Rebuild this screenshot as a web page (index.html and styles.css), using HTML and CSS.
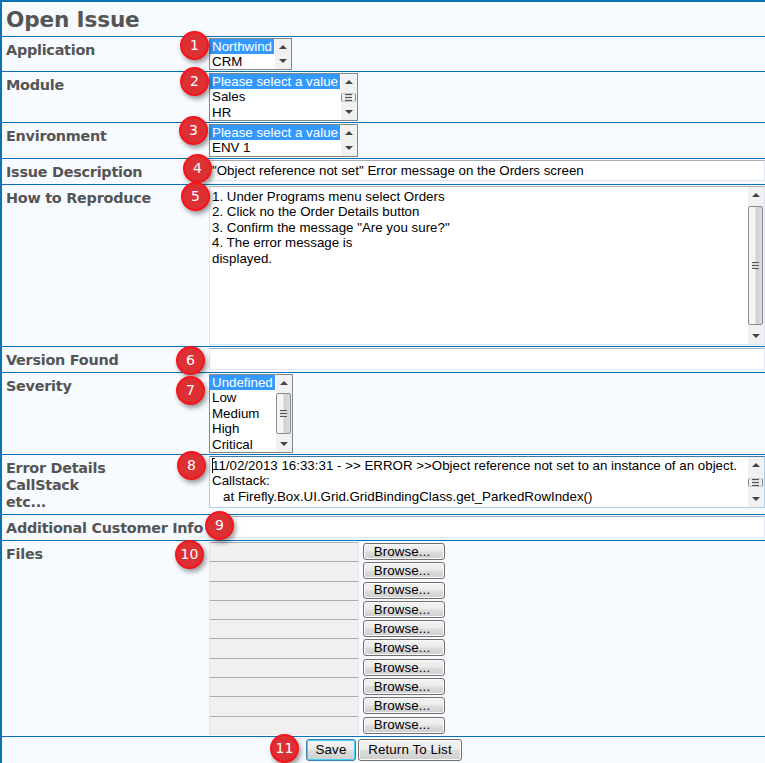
FILE: index.html
```html
<!DOCTYPE html>
<html lang="en">
<head>
<meta charset="utf-8">
<title>Open Issue</title>
<link rel="stylesheet" href="styles.css">
</head>
<body>
<main class="form">
  <h1 class="title"><span>Open Issue</span></h1>

  <div class="row r-app"><div class="label">Application</div>
    <div class="list"><div class="opts"><div class="opt on">Northwind</div><div class="opt">CRM</div></div><div class="bar"><i class="up"></i><i class="down"></i></div></div>
    <b class="badge">1</b></div>

  <div class="row r-mod"><div class="label">Module</div>
    <div class="list"><div class="opts"><div class="opt on">Please select a value</div><div class="opt">Sales</div><div class="opt">HR</div></div><div class="bar"><i class="up"></i><span class="thumb mini"><i class="grip"></i></span><i class="down"></i></div></div>
    <b class="badge">2</b></div>

  <div class="row r-env"><div class="label">Environment</div>
    <div class="list"><div class="opts"><div class="opt on">Please select a value</div><div class="opt">ENV 1</div></div><div class="bar"><i class="up"></i><i class="down"></i></div></div>
    <b class="badge">3</b></div>

  <div class="row r-desc"><div class="label">Issue Description</div>
    <div class="input">"Object reference not set" Error message on the Orders screen</div>
    <b class="badge">4</b></div>

  <div class="row r-how"><div class="label">How to Reproduce</div>
    <div class="area"><div class="text">1. Under Programs menu select Orders
2. Click no the Order Details button
3. Confirm the message "Are you sure?"
4. The error message is
displayed.</div><div class="bar"><i class="up"></i><span class="thumb"><i class="grip"></i></span><i class="down"></i></div></div>
    <b class="badge">5</b></div>

  <div class="row r-ver"><div class="label">Version Found</div>
    <div class="input"></div>
    <b class="badge">6</b></div>

  <div class="row r-sev"><div class="label">Severity</div>
    <div class="list"><div class="opts"><div class="opt on">Undefined</div><div class="opt">Low</div><div class="opt">Medium</div><div class="opt">High</div><div class="opt">Critical</div></div><div class="bar"><i class="up"></i><span class="thumb"><i class="grip"></i></span><i class="down"></i></div></div>
    <b class="badge">7</b></div>

  <div class="row r-err"><div class="label">Error Details<br>CallStack<br>etc...</div>
    <div class="area focus"><div class="text"><span class="caret"></span>11/02/2013 16:33:31 - &gt;&gt; ERROR &gt;&gt;Object reference not set to an instance of an object.
Callstack:
   at Firefly.Box.UI.Grid.GridBindingClass.get_ParkedRowIndex()</div><div class="bar"><i class="up"></i><span class="thumb mini"><i class="grip"></i></span><i class="down"></i></div></div>
    <b class="badge">8</b></div>

  <div class="row r-add"><div class="label">Additional Customer Info</div>
    <div class="input"></div>
    <b class="badge">9</b></div>

  <div class="row r-files"><div class="label">Files</div>
    <div class="files">
      <div class="file"><span class="path"></span><span class="btn">Browse...</span></div>
      <div class="file"><span class="path"></span><span class="btn">Browse...</span></div>
      <div class="file"><span class="path"></span><span class="btn">Browse...</span></div>
      <div class="file"><span class="path"></span><span class="btn">Browse...</span></div>
      <div class="file"><span class="path"></span><span class="btn">Browse...</span></div>
      <div class="file"><span class="path"></span><span class="btn">Browse...</span></div>
      <div class="file"><span class="path"></span><span class="btn">Browse...</span></div>
      <div class="file"><span class="path"></span><span class="btn">Browse...</span></div>
      <div class="file"><span class="path"></span><span class="btn">Browse...</span></div>
      <div class="file"><span class="path"></span><span class="btn">Browse...</span></div>
    </div>
    <b class="badge">10</b></div>

  <div class="row r-actions">
    <span class="btn save">Save</span><span class="btn back">Return To List</span>
    <b class="badge">11</b></div>
</main>
</body>
</html>
```
FILE: styles.css
```css
* { box-sizing: border-box; }
html, body { margin: 0; height: 763px; overflow: hidden; }
body { background: #f7fbff; font: 13.333px/15.4px "Liberation Sans", Arial, sans-serif; color: #000; }
.form { height: 763px; border: solid #0a73b7; border-width: 2px 0 0 2px; }
.title {
  margin: 0; height: 35px; padding-left: 4px; border-bottom: 1px solid #0a73b7;
  font: bold 21.6px/35px "DejaVu Sans", Verdana, sans-serif; letter-spacing: -.15px; color: #555;
}
.row { position: relative; display: flex; align-items: flex-start; border-bottom: 1px solid #0a73b7; padding-top: 1px; }
.label {
  flex: none; width: 207px; padding: 4px 0 0 4px; white-space: nowrap;
  font: bold 14.4px/17px "DejaVu Sans", Verdana, sans-serif; letter-spacing: -.25px; color: #555;
}
.r-app { height: 35px; }
.r-mod { height: 51px; }
.r-env { height: 36px; }
.r-desc, .r-ver, .r-add { height: 26px; }
.r-how { height: 162px; }
.r-sev { height: 82px; }
.r-err { height: 60px; }
.r-files { height: 196px; }
.r-actions { height: 26px; border: 0; padding: 2px 0 0 304px; gap: 2px; }

/* List boxes */
.list { display: flex; width: 149px; border: 1px solid #828790; background: #fff; overflow: hidden; }
.r-app .list { width: 83px; height: 32px; }
.r-mod .list { height: 48px; }
.r-env .list { height: 33px; }
.r-sev .list { width: 84px; height: 79px; }
.opts { flex: 1; padding-right: 1px; }
.opt { padding-left: 2px; white-space: nowrap; height: 15.4px; }
.opt.on { background: #3399ff; color: #fff; }

/* Scroll bars */
.bar { flex: none; width: 16px; padding: 6px 1px 6px 0; background: #f1f1f1; display: flex; flex-direction: column; align-items: center; justify-content: space-between; }
.up, .down { flex: none; width: 0; height: 0; border: 4px solid transparent; }
.up { border-top: 0; border-bottom-color: #444; }
.down { border-bottom: 0; border-top-color: #444; }
.thumb { width: 15px; border: 1px solid #8c8c8c; border-radius: 2px; background: linear-gradient(90deg, #f5f5f5 45%, #cfd0d4 55%, #dcdcde); display: flex; align-items: center; justify-content: center; }
.thumb.mini { height: 9px; border-color: #c8c8c8 #8c8c8c; background: #eee; }
.r-how .thumb { height: 119px; }
.r-sev .thumb { height: 41px; }
.grip { width: 7px; height: 7px; background: repeating-linear-gradient(#555 0 1px, #ddd 1px 3px); }

/* Text fields */
.input { flex: 1; height: 21px; padding: 2px 2px; background: #fff; border: 1px solid #e2e6ee; border-top-color: #abadb3; white-space: nowrap; }
.r-ver .input, .r-add .input { height: 22px; }
.area { flex: 1; display: flex; background: #fff; border: 1px solid #e2e6ee; border-top-color: #abadb3; overflow: hidden; }
.r-how .area { height: 159px; }
.r-err .area { height: 52px; }
.area.focus { border-color: #b5cfe7; border-top-color: #3d7bad; }
.text { flex: 1; min-width: 0; padding: 2px 0 0 2px; white-space: pre; position: relative; }
.focus .text { padding-top: 1px; }
.caret { position: absolute; left: 2px; top: 1px; width: 3px; height: 15px; border: solid #000; border-width: 1px 0 0 1px; }

/* File pickers */
.files { display: flex; flex-direction: column; height: 193px; }
.file { flex: 1; display: flex; gap: 4px; }
.path { width: 150px; background: #f0f0f0; border: solid #e2e6ee; border-width: 1px 1px 0; border-top-color: #abadb3; }
.btn {
  display: flex; align-items: center; justify-content: center; border: 1px solid #707070; border-radius: 3px;
  background: linear-gradient(#f3f3f3, #ebebeb 48%, #dddddd 52%, #cfcfcf); box-shadow: inset 0 0 0 1px #fafafa; letter-spacing: .1px; white-space: nowrap;
}
.file .btn { width: 82px; height: 17px; margin-top: 1px; padding-right: 4px; }
.save { width: 50px; height: 22px; border-color: #3c7fb1; box-shadow: inset 0 0 0 1px #48d1f5; }
.back { width: 104px; height: 22px; }

/* Numbered callouts */
.badge {
  position: absolute; z-index: 2; width: 29px; height: 29px; border-radius: 50%;
  border: 2px solid #f5151a; background: #dd3035; box-shadow: 2px 3px 5px rgba(0,0,0,.4);
  color: #fff; font: 14px/24px "DejaVu Sans", Tahoma, sans-serif; text-align: center;
}
.r-app .badge { left: 178px; top: -6px; }
.r-mod .badge { left: 178px; top: -5px; }
.r-env .badge { left: 177px; top: -7px; }
.r-desc .badge { left: 181px; top: -5px; }
.r-how .badge { left: 179px; top: -3px; }
.r-ver .badge { left: 174px; top: -1px; }
.r-sev .badge { left: 174px; top: 3px; }
.r-err .badge { left: 175px; top: -4px; }
.r-add .badge { left: 203px; top: -4px; }
.r-files .badge { left: 173px; top: -1px; }
.r-actions .badge { left: 268px; top: -3px; }
```
